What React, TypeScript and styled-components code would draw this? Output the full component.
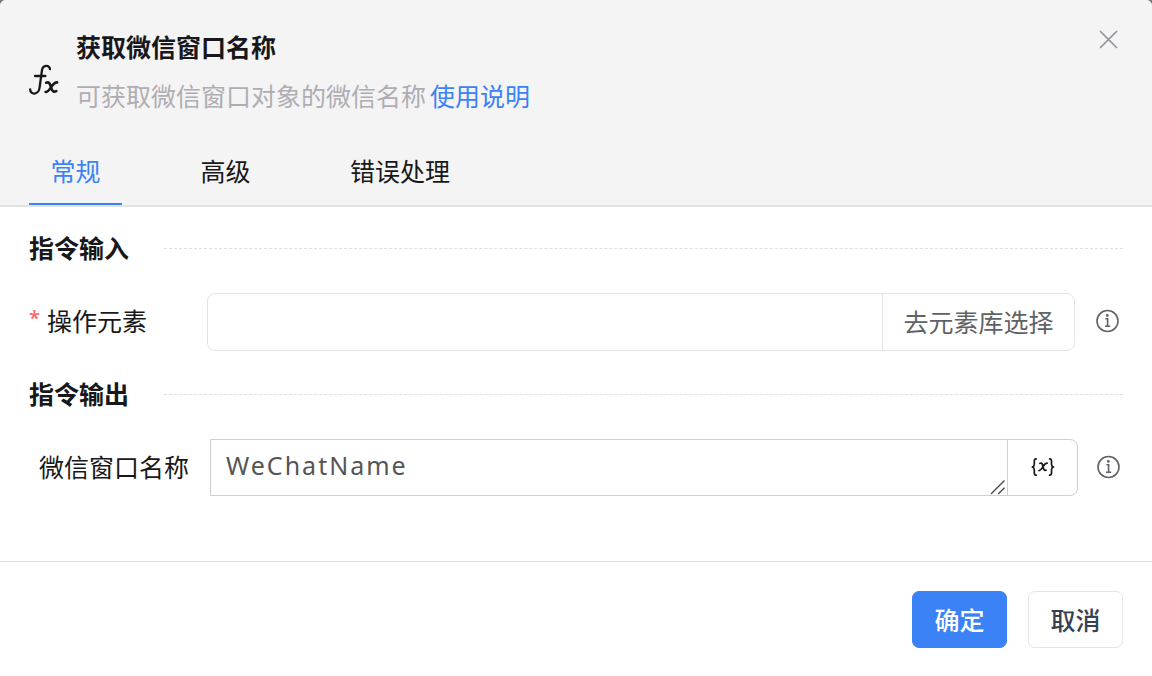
import React, { useState } from 'react';
import styled, { createGlobalStyle } from 'styled-components';

const GlobalStyle = createGlobalStyle`
  *, *::before, *::after { box-sizing: border-box; }
  body {
    margin: 0;
    background: #7b7b7d;
    color: #18181a;
    font-family: "Noto Sans CJK SC", "Noto Sans", sans-serif;
    font-size: 25px;
    line-height: 36px;
  }
  button, input, textarea { font: inherit; color: inherit; }
`;

const Dialog = styled.main`
  min-height: 100vh;
  background: #fff;
  border-radius: 6px 6px 0 0;
  overflow: hidden;
`;

const Header = styled.header`
  padding: 28px 29px 0;
  background: #f4f4f4;
  border-bottom: 2px solid #e3e3e4;
`;

const Heading = styled.div`
  display: flex;
  align-items: flex-start;
`;

const FunctionMark = styled.svg`
  flex: none;
  width: 30px;
  height: 32px;
  margin: 36px 17px 0 0;
`;

const Titles = styled.div`
  flex: 1;
`;

const Title = styled.h1`
  margin: 0 0 13px;
  font-size: 25px;
  line-height: 36px;
  font-weight: 700;
`;

const Description = styled.p`
  display: flex;
  gap: 4px;
  margin: 0;
  color: #afadb3;
`;

const HelpLink = styled.a`
  color: #3b82f6;
  text-decoration: none;
`;

const CloseButton = styled.button`
  display: flex;
  margin-right: 4px;
  padding: 0;
  border: 0;
  background: none;
  color: #909399;
  cursor: pointer;
`;

const Tabs = styled.div`
  display: flex;
  gap: 57px;
  margin-top: 36px;
`;

const Tab = styled.button<{ $active: boolean }>`
  min-width: 93px;
  padding: 3px 21px 15px;
  border: 0;
  border-bottom: 2px solid ${(p) => (p.$active ? '#3b82f6' : 'transparent')};
  background: none;
  color: ${(p) => (p.$active ? '#3b82f6' : '#18181a')};
  cursor: pointer;
`;

const Body = styled.form`
  padding: 23px 29px 65px;
`;

const SectionHeading = styled.div`
  display: flex;
  align-items: center;
  gap: 35px;
  margin-bottom: 27px;

  &::after {
    content: '';
    flex: 1;
    border-top: 1px dashed #dcdfe6;
  }
`;

const SectionTitle = styled.h2`
  margin: 0;
  padding-bottom: 2px;
  font-size: 25px;
  line-height: 34px;
  font-weight: 700;
`;

const Field = styled.div`
  display: flex;
  align-items: center;
  margin-bottom: 25px;

  &:last-child { margin-bottom: 0; }
`;

const Label = styled.label<{ $indent?: boolean }>`
  flex: none;
  display: flex;
  gap: 7px;
  width: ${(p) => (p.$indent ? 181 : 178)}px;
  padding-left: ${(p) => (p.$indent ? 10 : 0)}px;
  padding-bottom: 4px;
`;

const Required = styled.span`
  color: #f56c6c;
  font-family: "Noto Sans", sans-serif;
  font-size: 20px;
  line-height: 32px;
  font-weight: 600;
`;

const Group = styled.div<{ $tone: string; $radius: string }>`
  flex: 1;
  min-width: 0;
  display: flex;
  border: 1px solid ${(p) => p.$tone};
  border-radius: ${(p) => p.$radius};
`;

const TextInput = styled.input`
  flex: 1;
  min-width: 0;
  height: 56px;
  padding: 0 15px;
  border: 0;
  background: none;
  outline: none;
`;

const PickButton = styled.button`
  width: 192px;
  padding: 0 0 2px;
  border: 0;
  border-left: 1px solid #e4e4e7;
  background: none;
  color: #606266;
  cursor: pointer;
`;

const VariableArea = styled.div`
  position: relative;
  flex: 1;
  min-width: 0;
  display: flex;
`;

const TextArea = styled.textarea`
  flex: 1;
  min-width: 0;
  height: 55px;
  padding: 7px 15px;
  border: 0;
  background: none;
  outline: none;
  resize: none;
  overflow: hidden;
  color: #555;
  font-family: "Noto Sans", "Noto Sans CJK SC", sans-serif;
  letter-spacing: 2px;
`;

const Grip = styled.svg`
  position: absolute;
  right: 1px;
  bottom: 0;
`;

const VariableButton = styled.button`
  display: flex;
  align-items: center;
  justify-content: center;
  width: 70px;
  padding: 0 0 2px;
  border: 0;
  border-left: 1px solid #cfcfd1;
  background: none;
  cursor: pointer;
`;

const InfoButton = styled.button<{ $last?: boolean }>`
  flex: none;
  display: flex;
  margin: 0 ${(p) => (p.$last ? 2 : 3)}px 0 ${(p) => (p.$last ? 18 : 20)}px;
  padding: 0 0 2px;
  border: 0;
  background: none;
  color: #606266;
  cursor: pointer;
`;

const Footer = styled.footer`
  display: flex;
  justify-content: flex-end;
  gap: 21px;
  padding: 29px;
  border-top: 1px solid #e1e2e4;
`;

const ActionButton = styled.button<{ $primary?: boolean }>`
  width: 95px;
  height: 57px;
  padding: 0 0 2px;
  border: 1px solid ${(p) => (p.$primary ? '#3b82f6' : '#e4e5e9')};
  border-radius: 7px;
  background: ${(p) => (p.$primary ? '#3b82f6' : '#fff')};
  color: ${(p) => (p.$primary ? '#fff' : '#374151')};
  font-weight: 500;
  cursor: pointer;
`;

function InfoIcon() {
  return (
    <svg width="25" height="24" viewBox="0 0 25 24" fill="none" stroke="currentColor" strokeWidth="1.6" aria-hidden="true">
      <circle cx="12.5" cy="12" r="10.5" />
      <circle cx="12.3" cy="6.4" r="1.4" fill="currentColor" stroke="none" />
      <path d="M10.4 9.8h2.2v7.4M10 17.3h5.2" />
    </svg>
  );
}

const tabNames = ['常规', '高级', '错误处理'];

export default function App() {
  const [active, setActive] = useState(0);
  const [element, setElement] = useState('');
  const [variable, setVariable] = useState('WeChatName');

  return (
    <>
      <GlobalStyle />
      <Dialog>
        <Header>
          <Heading>
            <FunctionMark viewBox="0 0 30 32" fill="none" stroke="#18181a" strokeWidth="2.3" strokeLinecap="round" strokeLinejoin="round" aria-hidden="true">
              <path d="M21 5.3C21 .8 14.2.7 13 6L10.6 23.5C9.8 31 1.2 31.4 1.2 25.5M6 12h10.4" />
              <path strokeWidth="2.6" d="M17.2 18.7c3.2-1.2 3.7 1.2 4.7 4.2s1.9 6 5.4 4.3M28.1 18.4c-2.4-.2-3.6 1.3-5.7 4.3s-3.3 5.6-5.8 5.3" />
            </FunctionMark>
            <Titles>
              <Title>获取微信窗口名称</Title>
              <Description>
                可获取微信窗口对象的微信名称
                <HelpLink href="#help">使用说明</HelpLink>
              </Description>
            </Titles>
            <CloseButton type="button" aria-label="关闭">
              <svg width="22" height="22" viewBox="0 0 22 22" fill="none" stroke="currentColor" strokeWidth="1.7" strokeLinecap="round" aria-hidden="true">
                <path d="M3.5 3.5l16 16M19.5 3.5l-16 16" />
              </svg>
            </CloseButton>
          </Heading>
          <Tabs role="tablist">
            {tabNames.map((name, i) => (
              <Tab key={name} type="button" role="tab" aria-selected={i === active} $active={i === active} onClick={() => setActive(i)}>
                {name}
              </Tab>
            ))}
          </Tabs>
        </Header>

        <Body id="command" onSubmit={(e) => e.preventDefault()}>
          <SectionHeading><SectionTitle>指令输入</SectionTitle></SectionHeading>
          <Field>
            <Label htmlFor="element"><Required>*</Required>操作元素</Label>
            <Group $tone="#e4e4e7" $radius="8px">
              <TextInput id="element" value={element} onChange={(e) => setElement(e.target.value)} />
              <PickButton type="button">去元素库选择</PickButton>
            </Group>
            <InfoButton type="button" aria-label="操作元素说明"><InfoIcon /></InfoButton>
          </Field>

          <SectionHeading><SectionTitle>指令输出</SectionTitle></SectionHeading>
          <Field>
            <Label htmlFor="variable" $indent>微信窗口名称</Label>
            <Group $tone="#cfcfd1" $radius="0 8px 8px 0">
              <VariableArea>
                <TextArea id="variable" rows={1} spellCheck={false} value={variable} onChange={(e) => setVariable(e.target.value)} />
                <Grip width="16" height="16" viewBox="0 0 16 16" fill="none" stroke="#4a4a4a" strokeWidth="1.4" aria-hidden="true">
                  <path d="M1 15L14.5 1.5M8.2 15l6.3-6.3" />
                </Grip>
              </VariableArea>
              <VariableButton type="button" aria-label="选择变量">
                <svg width="24" height="20" viewBox="0 0 24 20" fill="none" stroke="#18181a" strokeWidth="1.7" strokeLinecap="round" strokeLinejoin="round" aria-hidden="true">
                  <path d="M5.2 1.8C3.3 1.8 3.3 2.8 3.3 4v3.3c0 1.5-.6 2.3-2 2.7 1.4.4 2 1.2 2 2.7V16c0 1.2 0 2.2 1.9 2.2M18.6 1.8c1.9 0 1.9 1 1.9 2.2v3.3c0 1.5.6 2.3 2 2.7-1.4.4-2 1.2-2 2.7V16c0 1.2 0 2.2-1.9 2.2" />
                  <path d="M8.9 6.3c2-.8 2.5.6 3.1 3.3s1.2 4.5 3.2 3.5M16.1 6.2c-1.7 0-2.7 1.2-4 3.3s-2.2 4.2-4.1 4.1" />
                </svg>
              </VariableButton>
            </Group>
            <InfoButton type="button" aria-label="微信窗口名称说明" $last><InfoIcon /></InfoButton>
          </Field>
        </Body>

        <Footer>
          <ActionButton type="submit" form="command" $primary>确定</ActionButton>
          <ActionButton type="button">取消</ActionButton>
        </Footer>
      </Dialog>
    </>
  );
}
